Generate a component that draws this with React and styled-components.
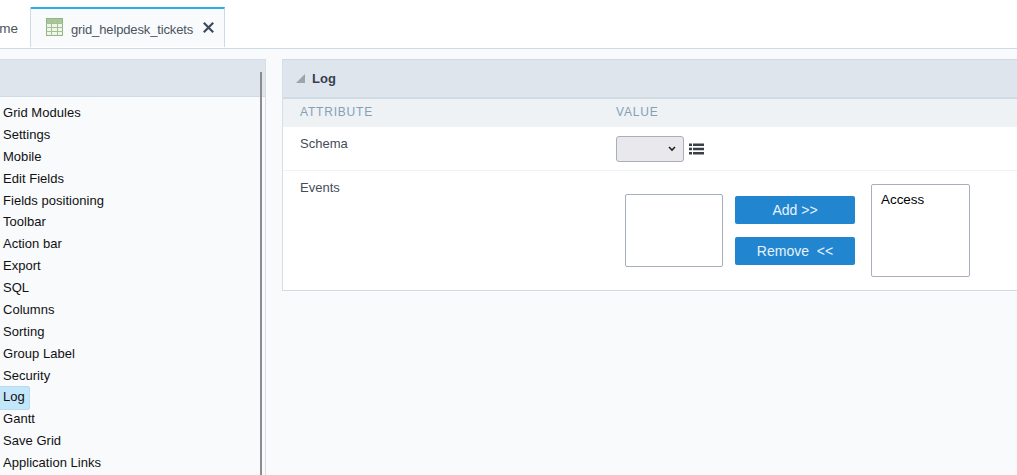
import React from "react";
import styled, { createGlobalStyle } from "styled-components";

const Global = createGlobalStyle`
  html, body { margin: 0; padding: 0; width: 1017px; height: 475px; overflow: hidden; background: #f8fafc; }
  #root { width: 1017px; height: 475px; overflow: hidden; }
  * { box-sizing: border-box; }
`;

const Page = styled.div`
  width: 1017px;
  height: 475px;
  overflow: hidden;
  font-family: "Liberation Sans", Arial, sans-serif;
`;

const TabBar = styled.div`
  height: 49px;
  background: #fff;
  border-bottom: 1px solid #ccd9e3;
  display: flex;
  align-items: flex-start;
  padding-top: 7px;
`;

const HomeTab = styled.div`
  width: 31px;
  height: 40px;
  display: flex;
  justify-content: flex-end;
  align-items: center;
  padding: 3px 12px 0 0;
  font-size: 13.5px;
  color: #4a5560;
  border-right: 1px solid #cbdbe5;
  overflow: hidden;
  white-space: nowrap;
`;

const ActiveTab = styled.div`
  width: 194px;
  height: 40px;
  background: #f8fafc;
  border-top: 2px solid #29aee8;
  border-right: 1px solid #cbdbe5;
  display: flex;
  align-items: center;
  padding-left: 15px;
  gap: 8px;
  font-size: 13px;
  letter-spacing: -0.14px;
  color: #4a5560;
`;

const TabLabel = styled.span`
  width: 124px;
  padding-top: 3px;
  white-space: nowrap;
`;

const Body = styled.div`
  display: flex;
  padding-top: 10px;
  gap: 16px;
  height: 426px;
`;

const Sidebar = styled.div`
  width: 266px;
  flex: none;
  height: 416px;
  position: relative;
  background: #f8fafc;
  border-right: 1px solid #d5dde5;
`;

const SidebarHead = styled.div`
  height: 38px;
  background: #dfe5ed;
  border-top: 1px solid #d6dde5;
  border-bottom: 1px solid #cfdbe5;
`;

const Scrollbar = styled.div`
  position: absolute;
  left: 260px;
  top: 13px;
  bottom: 0;
  width: 2px;
  background: #8c8c8c;
`;

const Menu = styled.ul`
  list-style: none;
  margin: 0;
  padding: 5px 0 0 0;
`;

const MenuItem = styled.li`
  height: 21.875px;
  line-height: 21.875px;
  font-size: 13px;
  letter-spacing: 0.03px;
  color: #111;
  padding-left: 3px;
  position: relative;
  z-index: 0;
  ${(p) =>
    p.$active &&
    `&::before {
      content: "";
      position: absolute;
      z-index: -1;
      left: -3px;
      top: 0;
      width: 31px;
      height: 22px;
      background: #c3e6fa;
      border: 1px solid #b5dcf2;
      border-radius: 2px;
    }`}
`;

const Panel = styled.div`
  flex: none;
  width: 760px;
  height: 232px;
  border-left: 1px solid #d5dfe8;
  border-bottom: 1px solid #cfdde3;
  background: #fff;
`;

const PanelHead = styled.div`
  height: 40px;
  background: #dfe5ed;
  border-top: 1px solid #d0dae4;
  border-bottom: 2px solid #cfdbe5;
  display: flex;
  align-items: center;
  padding: 0 0 1px 13px;
  gap: 7px;
  font-size: 13px;
  font-weight: 700;
  color: #36404f;
`;

const ColHead = styled.div`
  height: 28px;
  background: #eef2f5;
  display: flex;
  align-items: center;
  padding: 0 0 2px 17px;
  font-size: 12px;
  letter-spacing: 0.8px;
  color: #84a0b5;
`;

const AttrCol = styled.div`
  width: 316px;
  flex: none;
`;

const Row = styled.div`
  display: flex;
  padding-left: 17px;
  font-size: 13px;
  color: #444c58;
  height: ${(p) => p.$h}px;
  border-bottom: ${(p) => (p.$line ? "1px solid #eef2f5" : "none")};
`;

const AttrLabel = styled(AttrCol)`
  padding-top: 9px;
`;

const ValueCell = styled.div`
  display: flex;
  align-items: center;
  gap: 5px;
  height: 26px;
  margin-top: 9px;
`;

const FakeSelect = styled.div`
  width: 68px;
  height: 26px;
  background: #e9e9ed;
  border: 1px solid #a7afbd;
  border-radius: 3px;
  display: flex;
  align-items: center;
  justify-content: flex-end;
  padding-right: 7px;
`;

const Transfer = styled.div`
  display: flex;
  align-items: flex-start;
  padding-left: 9px;
  padding-top: 13px;
`;

const ListBox = styled.div`
  width: ${(p) => p.$w}px;
  height: ${(p) => p.$h}px;
  margin-top: ${(p) => p.$top}px;
  background: #fff;
  border: 1px solid #a7afbd;
  border-radius: 2px;
  padding: 7px 9px;
  font-size: 13.4px;
  line-height: 15px;
  color: #000;
`;

const ButtonCol = styled.div`
  display: flex;
  flex-direction: column;
  gap: 13px;
  width: 120px;
  margin: 12px 16px 0 12px;
`;

const Btn = styled.div`
  height: 28px;
  background: #2285d0;
  border-radius: 2px;
  color: #e6f3fc;
  font-size: 14px;
  display: flex;
  align-items: center;
  justify-content: center;
  white-space: pre;
`;

const IconSlot = styled.svg`
  flex: none;
  margin-top: ${(p) => p.$mt || 0}px;
`;

const GridIcon = () => (
  <IconSlot width="17" height="18" viewBox="0 0 17 18" $mt={-3}>
    <rect x="0.5" y="0.5" width="16" height="17" fill="#f1f5e8" stroke="#93b385" />
    <rect x="1" y="1" width="15" height="4" fill="#a9c79b" />
    <path d="M0 5.5H17M0 9.5H17M0 13.5H17M5.5 0V18M11.5 0V18" stroke="#a3bf95" strokeWidth="1" fill="none" />
  </IconSlot>
);

const CloseIcon = () => (
  <IconSlot width="11" height="11" viewBox="0 0 11 11" $mt={-2}>
    <path d="M0.8 0.8L10.2 10.2M10.2 0.8L0.8 10.2" stroke="#3e4a5c" strokeWidth="2.2" />
  </IconSlot>
);

const Triangle = () => (
  <IconSlot width="9" height="9" viewBox="0 0 9 9" $mt={0}>
    <path d="M9 0V9H0Z" fill="#9aa5b1" />
  </IconSlot>
);

const Chevron = () => (
  <svg width="8" height="6" viewBox="0 0 8 6">
    <path d="M1 1L4 4L7 1" stroke="#222" strokeWidth="1.6" fill="none" />
  </svg>
);

const ListIcon = () => (
  <svg width="15" height="12" viewBox="0 0 15 12">
    <path d="M0 0.5h3v2.5H0zM0 4.8h3v2.5H0zM0 9h3v2.5H0zM4 0.5h11v2.5H4zM4 4.8h11v2.5H4zM4 9h11v2.5H4z" fill="#3a3f47" />
  </svg>
);

const items = [
  "Grid Modules", "Settings", "Mobile", "Edit Fields", "Fields positioning", "Toolbar",
  "Action bar", "Export", "SQL", "Columns", "Sorting", "Group Label", "Security", "Log",
  "Gantt", "Save Grid", "Application Links",
];

export default function App() {
  return (
    <Page>
      <Global />
      <TabBar>
        <HomeTab>me</HomeTab>
        <ActiveTab>
          <GridIcon />
          <TabLabel>grid_helpdesk_tickets</TabLabel>
          <CloseIcon />
        </ActiveTab>
      </TabBar>
      <Body>
        <Sidebar>
          <SidebarHead />
          <Scrollbar />
          <Menu>
            {items.map((t) => (
              <MenuItem key={t} $active={t === "Log"}>{t}</MenuItem>
            ))}
          </Menu>
        </Sidebar>
        <Panel>
          <PanelHead>
            <Triangle />
            Log
          </PanelHead>
          <ColHead>
            <AttrCol>ATTRIBUTE</AttrCol>
            <span>VALUE</span>
          </ColHead>
          <Row $h={44} $line>
            <AttrLabel>Schema</AttrLabel>
            <ValueCell>
              <FakeSelect><Chevron /></FakeSelect>
              <ListIcon />
            </ValueCell>
          </Row>
          <Row $h={119}>
            <AttrLabel>Events</AttrLabel>
            <Transfer>
              <ListBox $w={98} $h={73} $top={10} />
              <ButtonCol>
                <Btn>Add &gt;&gt;</Btn>
                <Btn>Remove  &lt;&lt;</Btn>
              </ButtonCol>
              <ListBox $w={99} $h={93} $top={0}>Access</ListBox>
            </Transfer>
          </Row>
        </Panel>
      </Body>
    </Page>
  );
}
